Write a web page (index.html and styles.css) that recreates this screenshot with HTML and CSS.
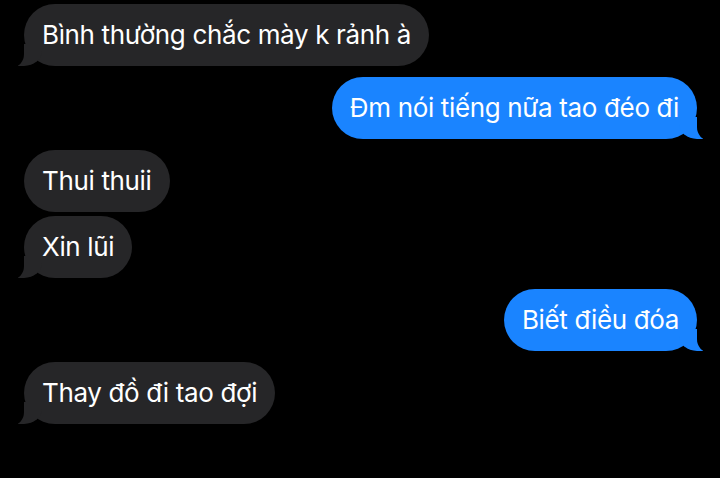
FILE: index.html
```html
<!DOCTYPE html>
<html lang="vi">
<head>
<meta charset="utf-8">
<link rel="stylesheet" href="styles.css">
</head>
<body>
<div class="chat">
  <div class="msg them tail">Bình thường chắc mày k rảnh à</div>
  <div class="msg me tail">Đm nói tiếng nữa tao đéo đi</div>
  <div class="group">
    <div class="msg them">Thui thuii</div>
    <div class="msg them tail">Xin lũi</div>
  </div>
  <div class="msg me tail">Biết điều đóa</div>
  <div class="msg them tail">Thay đồ đi tao đợi</div>
</div>
</body>
</html>
```
FILE: styles.css
```css
html, body {
  margin: 0;
  padding: 0;
  background: #000;
}
body {
  width: 720px;
  height: 478px;
  overflow: hidden;
  font-family: Inter, "Noto Sans", sans-serif;
}
.chat {
  display: flex;
  flex-direction: column;
  gap: 11px;
  padding: 4px 23px 0 24px;
}
.group {
  display: flex;
  flex-direction: column;
  gap: 4px;
}
.msg {
  position: relative;
  box-sizing: border-box;
  height: 62px;
  padding: 0 18px;
  border-radius: 31px;
  font-size: 26px;
  line-height: 62px;
  color: #fff;
  letter-spacing: -0.35px;
  white-space: nowrap;
}
.them {
  align-self: flex-start;
  background: #262628;
}
.me {
  align-self: flex-end;
  background: #1a84ff;
}
.tail::before,
.tail::after {
  content: "";
  position: absolute;
  bottom: 0;
  height: 22px;
}
.them.tail::before {
  left: -6px;
  width: 24px;
  background: #262628;
  border-bottom-right-radius: 18px 15px;
}
.them.tail::after {
  left: -30px;
  width: 30px;
  bottom: -1px;
  height: 24px;
  background: #000;
  border-bottom-right-radius: 11px 13px;
}
.me.tail::before {
  right: -6px;
  width: 24px;
  background: #1a84ff;
  border-bottom-left-radius: 18px 15px;
}
.me.tail::after {
  right: -30px;
  width: 30px;
  bottom: -1px;
  height: 24px;
  background: #000;
  border-bottom-left-radius: 11px 13px;
}
```
